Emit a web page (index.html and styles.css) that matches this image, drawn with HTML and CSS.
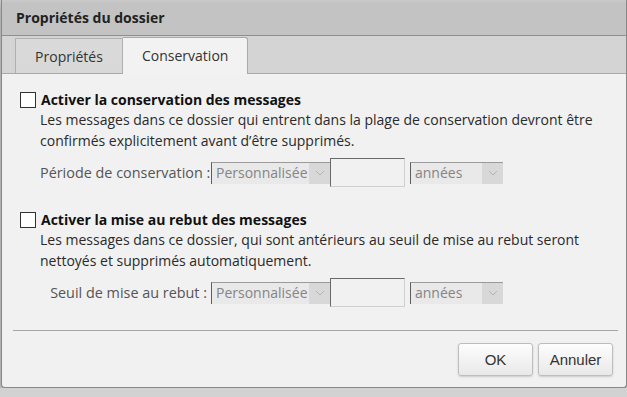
FILE: index.html
```html
<!DOCTYPE html>
<html lang="fr">
<head>
    <meta charset="UTF-8">
    <meta name="viewport" content="width=device-width, initial-scale=1.0">
    <title>Propriétés du dossier</title>
    <link rel="stylesheet" href="styles.css">
</head>
<body>
    <div class="dialog">
        <div class="titlebar">Propriétés du dossier</div>
        <div class="tabs">
            <div class="tab">Propriétés</div>
            <div class="tab active">Conservation</div>
        </div>
        <div class="content">
            <div class="section">
                <label class="check-row"><span class="checkbox"></span><span class="heading">Activer la conservation des messages</span></label>
                <p class="desc">Les messages dans ce dossier qui entrent dans la plage de conservation devront être confirmés explicitement avant d’être supprimés.</p>
                <div class="field-row">
                    <span class="field-label">Période de conservation :</span>
                    <span class="select wide"><span class="select-value">Personnalisée</span><span class="select-arrow"><svg width="10" height="6" viewBox="0 0 10 6"><path d="M1 1l4 4 4-4" fill="none" stroke="#b4b4b4" stroke-width="1"/></svg></span></span>
                    <span class="num-input"></span>
                    <span class="select unit"><span class="select-value">années</span><span class="select-arrow"><svg width="10" height="6" viewBox="0 0 10 6"><path d="M1 1l4 4 4-4" fill="none" stroke="#b4b4b4" stroke-width="1"/></svg></span></span>
                </div>
            </div>
            <div class="section">
                <label class="check-row"><span class="checkbox"></span><span class="heading">Activer la mise au rebut des messages</span></label>
                <p class="desc">Les messages dans ce dossier, qui sont antérieurs au seuil de mise au rebut seront nettoyés et supprimés automatiquement.</p>
                <div class="field-row">
                    <span class="field-label">Seuil de mise au rebut :</span>
                    <span class="select wide"><span class="select-value">Personnalisée</span><span class="select-arrow"><svg width="10" height="6" viewBox="0 0 10 6"><path d="M1 1l4 4 4-4" fill="none" stroke="#b4b4b4" stroke-width="1"/></svg></span></span>
                    <span class="num-input"></span>
                    <span class="select unit"><span class="select-value">années</span><span class="select-arrow"><svg width="10" height="6" viewBox="0 0 10 6"><path d="M1 1l4 4 4-4" fill="none" stroke="#b4b4b4" stroke-width="1"/></svg></span></span>
                </div>
            </div>
        </div>
        <div class="footer">
            <button class="btn">OK</button>
            <button class="btn">Annuler</button>
        </div>
    </div>
</body>
</html>
```

FILE: styles.css
```css
body {
    margin: 0;
    background: #d2d2d2;
    font-family: "Open Sans", "Noto Sans", sans-serif;
    color: #1e1e1e;
}
.dialog {
    width: 624px;
    height: 387px;
    margin-left: 1px;
    background: #f1f1f1;
    border: 1px solid #888;
    border-top: none;
    border-radius: 0 0 4px 4px;
    box-shadow: 0 3px 8px rgba(0, 0, 0, 0.35);
    display: flex;
    flex-direction: column;
}
.titlebar {
    height: 35px;
    line-height: 35px;
    padding-left: 14px;
    background: linear-gradient(#cbcbcb, #c3c3c3 3px);
    border-bottom: 1px solid #8f8f8f;
    font-size: 14px;
    font-weight: 700;
    color: #222;
}
.tabs {
    height: 37px;
    background: #d4d4d4;
    border-bottom: 1px solid #a9a9a9;
    display: flex;
    align-items: flex-end;
    padding-left: 13px;
}
.tab {
    height: 35px;
    line-height: 36px;
    padding: 0 19px;
    border: 1px solid #b0b0b0;
    border-bottom: none;
    background: linear-gradient(#dadada, #d8d8d8);
    font-size: 14px;
    color: #333;
    box-sizing: border-box;
    width: 108px;
    text-align: center;
}
.tab.active {
    width: 125px;
    height: 37px;
    margin-bottom: -1px;
    background: #f2f2f2;
    border-color: #a9a9a9;
    border-left: none;
    border-radius: 0 3px 0 0;
}
.content {
    flex: 1;
    min-height: 0;
    padding: 16px 0 0 18px;
}
.section {
    margin-bottom: 23px;
}
.section:last-child {
    margin-bottom: 0;
}
.check-row {
    display: flex;
    align-items: center;
    height: 19px;
}
.checkbox {
    width: 14px;
    height: 14px;
    border: 1px solid #333;
    background: #fff;
    margin-right: 5px;
}
.heading {
    font-size: 14px;
    font-weight: 700;
    color: #111;
}
.desc {
    margin: 1px 0 0 20px;
    width: 580px;
    font-size: 14px;
    line-height: 20.5px;
    color: #2a2a2a;
}
.field-row {
    display: flex;
    align-items: center;
    margin: 7px 0 0 20px;
    height: 29px;
}
.field-label {
    flex-shrink: 0;
    width: 171px;
    box-sizing: border-box;
    white-space: nowrap;
    text-align: right;
    padding-right: 4px;
    font-size: 14.4px;
    color: #555;
}
.select {
    display: flex;
    height: 22px;
    box-sizing: border-box;
    border-top: 1px solid #9a9a9a;
    border-left: 1px solid #5e5e5e;
    background: #e9e9e9;
}
.select.wide {
    width: 119px;
}
.select.unit {
    width: 93px;
    margin-left: 5px;
}
.select-value {
    flex: 1;
    padding-left: 4px;
    font-size: 14px;
    line-height: 20px;
    color: #858585;
}
.select-arrow {
    width: 21px;
    background: #d8d8d8;
    display: flex;
    align-items: center;
    justify-content: center;
}
.num-input {
    width: 75px;
    height: 29px;
    box-sizing: border-box;
    border: 1px solid #d0d0d0;
    border-top-color: #6a6a6a;
    border-left-color: #6a6a6a;
    background: #f1f1f1;
}
.footer {
    flex-shrink: 0;
    margin: 0 8px 0 11px;
    border-top: 1px solid #a6a6a6;
    display: flex;
    justify-content: flex-end;
    gap: 5px;
    padding: 12px 5px 11px 0;
}
.btn {
    width: 75px;
    height: 33px;
    border: 1px solid #bdbdbd;
    border-radius: 3px;
    background: linear-gradient(#fdfdfd, #e9e9e9);
    box-shadow: 0 1px 2px rgba(0, 0, 0, 0.15);
    font-family: "Liberation Sans", Arial, sans-serif;
    font-size: 15px;
    color: #333;
}
```
